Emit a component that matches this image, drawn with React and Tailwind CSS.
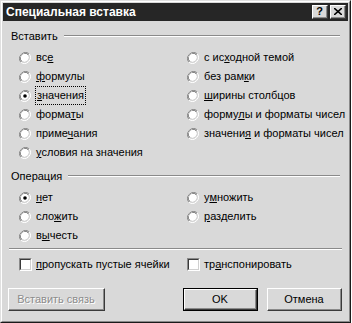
import React from 'react';

const FONT = { fontFamily: '"Liberation Sans", Arial, sans-serif' };

function Radio({ checked }) {
  return (
    <svg width="12" height="12" viewBox="0 0 12 12" className="shrink-0">
      <path d="M10.2 1.8 A6 6 0 0 0 1.8 10.2" fill="none" stroke="#8a8a8a" strokeWidth="1" />
      <path d="M9.4 2.6 A4.9 4.9 0 0 0 2.6 9.4" fill="none" stroke="#3a3a3a" strokeWidth="1" />
      <circle cx="6" cy="6" r="4.3" fill="#ffffff" />
      <path d="M1.8 10.2 A6 6 0 0 0 10.2 1.8" fill="none" stroke="#ffffff" strokeWidth="1" />
      <path d="M2.6 9.4 A4.9 4.9 0 0 0 9.4 2.6" fill="none" stroke="#d0d0d0" strokeWidth="1" />
      {checked && <circle cx="6" cy="6" r="1.8" fill="#000000" />}
    </svg>
  );
}

function Check() {
  return (
    <span className="box-border block h-[13px] w-[13px] shrink-0 border-t border-l border-t-[#8a8a8a] border-l-[#8a8a8a] border-r border-b border-r-white border-b-white">
      <span className="box-border block h-full w-full border-t border-l border-t-[#3a3a3a] border-l-[#3a3a3a] border-r border-b border-r-[#d0d0d0] border-b-[#d0d0d0] bg-white" />
    </span>
  );
}

function Label({ pre = '', u, post = '', focus }) {
  return (
    <span className={focus ? 'outline outline-1 outline-dotted outline-black px-[1px]' : ''}>
      {pre}
      <span className="underline underline-offset-[1px]">{u}</span>
      {post}
    </span>
  );
}

function RadioRow({ checked, focus, ...rest }) {
  return (
    <div className="flex h-[19px] items-center gap-[5px]">
      <Radio checked={checked} />
      <Label focus={focus} {...rest} />
    </div>
  );
}

function GroupTitle({ text }) {
  return (
    <div className="flex h-[14px] items-center gap-[6px] pl-[8px] pr-[8px]">
      <span>{text}</span>
      <div className="flex-1 border-t border-b border-t-[#8a8a8a] border-b-white" />
    </div>
  );
}

function Btn({ children, def, disabled, className = '' }) {
  return (
    <div
      className={
        'box-border h-[23px] bg-[#d9d9d9] ' +
        (def ? 'border border-black ' : '') +
        className
      }
    >
      <div className="box-border flex h-full w-full items-center justify-center border-t border-l border-t-white border-l-white border-r border-b border-r-[#3a3a3a] border-b-[#3a3a3a]">
        <div className="box-border flex h-full w-full items-center justify-center border-r border-b border-r-[#8a8a8a] border-b-[#8a8a8a]">
          {disabled ? (
            <span className="text-[#8c8c8c] [text-shadow:1px_1px_0_#ffffff]">{children}</span>
          ) : (
            <span className="text-black">{children}</span>
          )}
        </div>
      </div>
    </div>
  );
}

export default function App() {
  return (
    <div className="h-[323px] w-[352px] bg-white" style={FONT}>
      <div className="box-border flex h-[323px] w-[351px] flex-col border-t border-l border-t-[#e0e0e0] border-l-[#e0e0e0] border-r border-b border-r-[#1a1a1a] border-b-[#1a1a1a] bg-[#d9d9d9] text-[11px] text-black">
        <div className="box-border flex flex-1 flex-col border-t border-l border-t-white border-l-white border-r border-b border-r-[#8a8a8a] border-b-[#8a8a8a] p-[1px]">
          {/* title bar */}
          <div className="flex h-[18px] items-center justify-between bg-[#262626] pl-[3px] pr-[2px]">
            <span className="text-[12px] font-bold text-white">Специальная вставка</span>
            <div className="flex items-center gap-[2px]">
              <Btn className="w-[16px] !h-[14px]">
                <span className="text-[11px] font-bold leading-none">?</span>
              </Btn>
              <Btn className="w-[16px] !h-[14px]">
                <svg width="8" height="7" viewBox="0 0 8 7">
                  <path d="M0 0 L8 7 M8 0 L0 7" stroke="#000" strokeWidth="1.6" />
                </svg>
              </Btn>
            </div>
          </div>

          <div className="flex flex-col pt-[8px]">
            <GroupTitle text="Вставить" />
            <div className="mt-[5px] grid grid-cols-[168px_1fr] pl-[16px]">
              <div className="flex flex-col">
                <RadioRow pre="вс" u="е" />
                <RadioRow u="ф" post="ормулы" />
                <RadioRow checked focus u="з" post="начения" />
                <RadioRow pre="форма" u="т" post="ы" />
                <RadioRow pre="приме" u="ч" post="ания" />
                <RadioRow u="у" post="словия на значения" />
              </div>
              <div className="flex flex-col">
                <RadioRow pre="с ис" u="х" post="одной темой" />
                <RadioRow pre="без рам" u="к" post="и" />
                <RadioRow u="ш" post="ирины столбцов" />
                <RadioRow pre="форму" u="л" post="ы и форматы чисел" />
                <RadioRow pre="значени" u="я" post=" и форматы чисел" />
              </div>
            </div>

            <div className="mt-[7px]">
              <GroupTitle text="Операция" />
            </div>
            <div className="mt-[5px] grid grid-cols-[168px_1fr] pl-[16px]">
              <div className="flex flex-col">
                <RadioRow checked u="н" post="ет" />
                <RadioRow pre="сло" u="ж" post="ить" />
                <RadioRow pre="в" u="ы" post="честь" />
              </div>
              <div className="flex flex-col">
                <RadioRow pre="у" u="м" post="ножить" />
                <RadioRow u="р" post="азделить" />
              </div>
            </div>

            <div className="mx-[6px] mt-[3px] border-t border-b border-t-[#8a8a8a] border-b-white" />

            <div className="mt-[6px] grid h-[15px] grid-cols-[168px_1fr] items-center pl-[16px]">
              <div className="flex items-center gap-[4px]">
                <Check />
                <Label u="п" post="ропускать пустые ячейки" />
              </div>
              <div className="flex items-center gap-[4px]">
                <Check />
                <Label pre="тр" u="а" post="нспонировать" />
              </div>
            </div>

            <div className="mt-[17px] flex items-center pl-[5px] pr-[6px]">
              <Btn disabled className="w-[97px]">Вставить связь</Btn>
              <div className="flex-1" />
              <Btn def className="w-[75px]">OK</Btn>
              <Btn className="ml-[9px] w-[75px]">Отмена</Btn>
            </div>
          </div>
        </div>
      </div>
    </div>
  );
}
